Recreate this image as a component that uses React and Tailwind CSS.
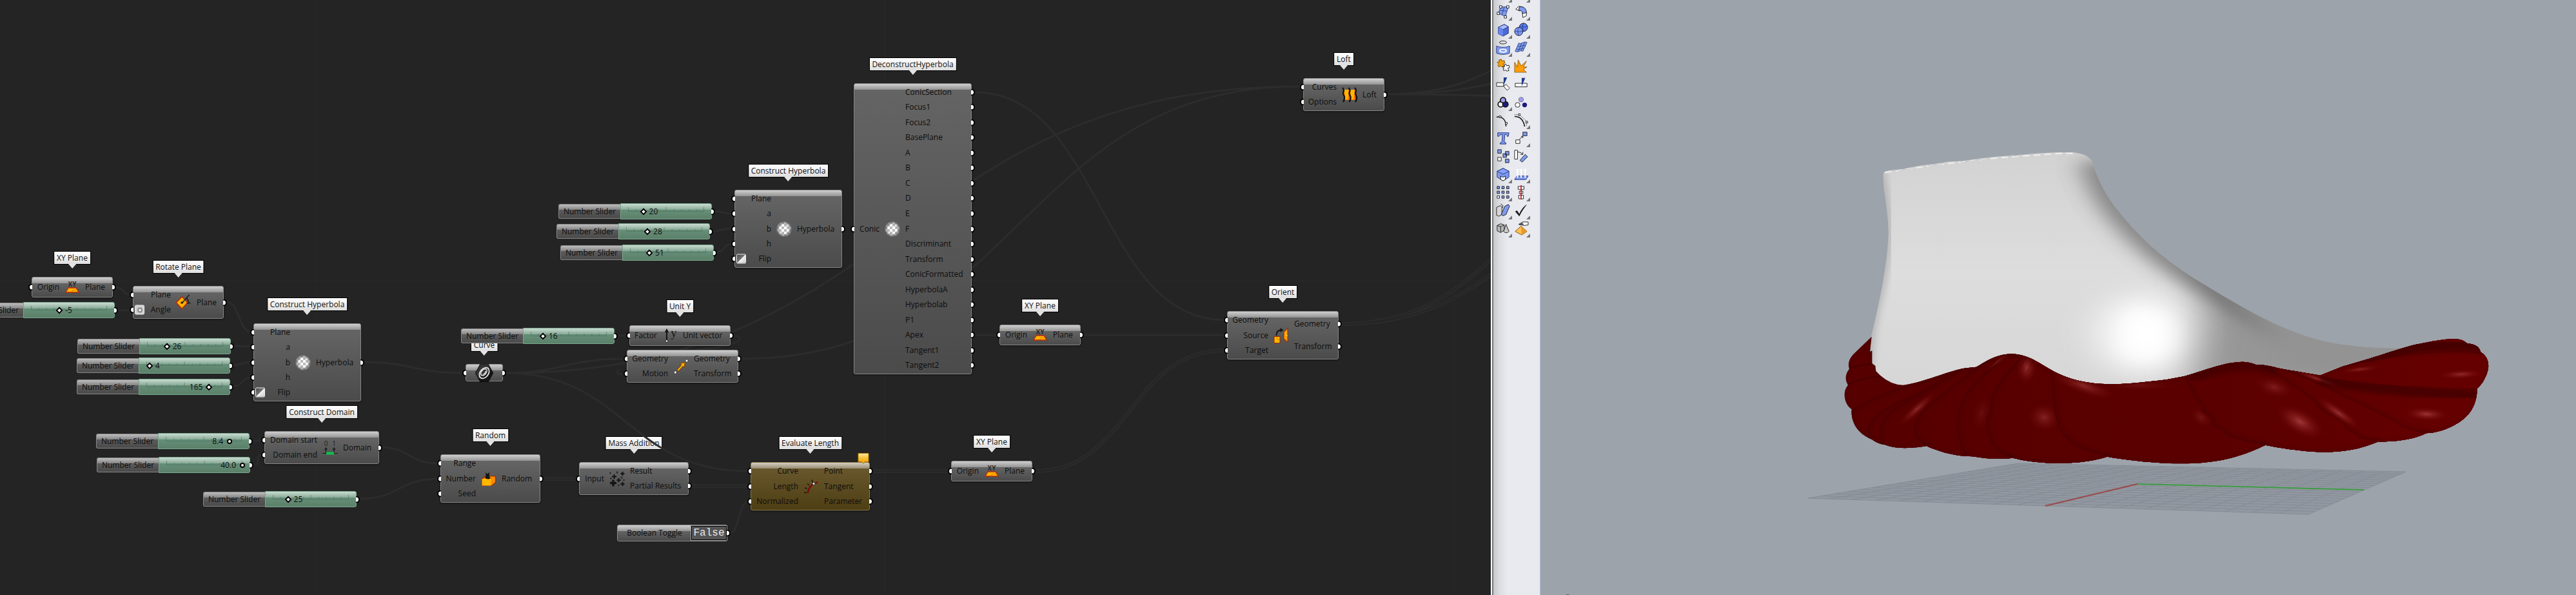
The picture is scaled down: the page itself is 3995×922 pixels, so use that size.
import React from "react";

/* ---------- component icons ---------- */

const Svg = ({ children, className = "size-6" }) => (
  <svg viewBox="0 0 24 24" className={`overflow-visible ${className}`} aria-hidden="true">
    {children}
  </svg>
);

const XYIcon = () => (
  <Svg>
    <text x="12" y="11" textAnchor="middle" fontSize="10" fontWeight="700" fill="#2a2a2a" fontFamily="Open Sans, sans-serif">XY</text>
    <path d="M6 13h12l4 7H2z" fill="#ffb400" stroke="#b8290a" strokeWidth="1.3" />
    <path d="M12 16.500h6M12 16.500v3" stroke="#e87a00" fill="none" />
  </Svg>
);

const RotatePlaneIcon = () => (
  <Svg className="size-7 shrink-0">
    <path d="M9.500 4l7.500 8-7.500 8L2 12z" fill="#ffb400" stroke="#b8290a" strokeWidth="1.300" />
    <path d="M9.500 12h4" stroke="#e87a00" />
    <circle cx="9.500" cy="12" r="1.600" fill="#222" />
    <path d="M10 12L19.500 1.500M15 6.500c3 1 3.500 3 3.200 6M14.500 6l2.500.2M16 12.500h5" stroke="#222" strokeWidth="1.400" fill="none" />
  </Svg>
);

const GlobeIcon = () => {
  const cells = [];
  for (let r = 0; r < 6; r++)
    for (let c = 0; c < 6; c++)
      if ((r + c) % 2) cells.push(<rect key={`${r}-${c}`} x={c * 4} y={r * 4} width="4" height="4" fill="#fff" />);
  return (
    <Svg>
      <defs>
        <radialGradient id="globeFade">
          <stop offset="0.55" stopColor="#fff" />
          <stop offset="1" stopColor="#fff" stopOpacity="0.1" />
        </radialGradient>
        <mask id="globeMask"><circle cx="12" cy="12" r="12" fill="url(#globeFade)" /></mask>
      </defs>
      <g mask="url(#globeMask)">
        <rect width="24" height="24" fill="#b9b9b9" />
        {cells}
      </g>
    </Svg>
  );
};

const DomainIcon = () => (
  <Svg>
    <text x="5.500" y="9" textAnchor="middle" fontSize="10" fill="#1c1c1c" fontFamily="Open Sans, sans-serif">0</text>
    <text x="18" y="9" textAnchor="middle" fontSize="10" fill="#1c1c1c" fontFamily="Open Sans, sans-serif">1</text>
    <path d="M5.500 11v10M18 11v10M0 20.500h24" stroke="#1c1c1c" strokeWidth="1.200" />
    <path d="M3 13h5l-2.500 4zM15.500 13h5L18 17z" fill="#1c1c1c" />
    <rect x="6" y="18.500" width="12" height="4" fill="#0bc24e" />
  </Svg>
);

const CurveHexIcon = () => (
  <Svg className="size-7 shrink-0">
    <path d="M6.500 0.800h11L23.500 12l-6 11.200h-11L0.500 12z" fill="#161616" stroke="#0a0a0a" />
    <path d="M6.500 1h11L20 6 5 20 .8 12z" fill="#4a4a4a" opacity=".6" />
    <ellipse cx="12" cy="12" rx="8" ry="5.500" transform="rotate(-52 12 12)" fill="none" stroke="#e8e8e8" strokeWidth="1.500" />
    <ellipse cx="12.500" cy="11" rx="5" ry="3.200" transform="rotate(-52 12 12)" fill="none" stroke="#e8e8e8" strokeWidth="1.300" />
    <path d="M10 14c2 0 4-2 4-4.500" fill="none" stroke="#e8e8e8" strokeWidth="1.300" />
  </Svg>
);

const UnitYIcon = () => (
  <Svg>
    <path d="M7 5v15" stroke="#141414" strokeWidth="2" />
    <path d="M7 1l3.200 6H3.800z" fill="#141414" />
    <circle cx="7" cy="20.500" r="1.900" fill="#fff" stroke="#141414" />
    <text x="18" y="14" textAnchor="middle" fontSize="19" fill="#1c1c1c" fontFamily="Liberation Serif, serif">y</text>
  </Svg>
);

const MoveIcon = () => (
  <Svg>
    <path d="M6 17.500l7-8.200-2.800-1.800 8-2-1 8.500-2-2.800-7 8z" fill="#ffb400" stroke="#7a3a00" strokeWidth="1" />
    <circle cx="3.300" cy="21" r="2.200" fill="#fff" stroke="#333" />
    <circle cx="21" cy="3" r="2.200" fill="#fff" stroke="#333" />
  </Svg>
);

const RandomIcon = () => (
  <Svg>
    <path d="M1.500 12l6-4h15v9.500l-6 5h-15z" fill="#ff8a00" stroke="#a12c00" strokeWidth="1.200" />
    <path d="M1.500 12h14v10.500h-14z" fill="#ffb800" />
    <path d="M7 1l1.500 3h2.500l1.500-3 .5 8 2 2-3 1.500-4-.5-2-2 1.500-2z" fill="#151515" />
  </Svg>
);

const MassIcon = () => (
  <Svg>
    <g stroke="#151515" fill="none">
      <path d="M1 18.500h10M6 13.500v10" strokeWidth="3.400" />
      <path d="M4 8.500h7M7.500 5v7M11.500 14h6M14.500 11v6M17.500 20h6M20.500 17v6M17.500 4h6M20.500 1v6" strokeWidth="2.100" />
      <path d="M0 3h3M1.500 1.500v3M10 2h4M12 0v4M17 10h4M19 8v4M1 11.500h3M2.500 10v3M13 22h3M14.500 20.500v3M21 14h3M22.500 12.500v3" strokeWidth="1.100" opacity=".75" />
    </g>
  </Svg>
);

const EvalLengthIcon = () => (
  <Svg>
    <path d="M6.500 22C8 14 12 7.500 22 5.500" fill="none" stroke="#7a0c0c" strokeWidth="2.600" />
    <path d="M1 21.500h4M2 14l3.500 1M6 7.500l3 2.500M13 1.500l1.500 4" stroke="#1b1505" strokeWidth="1.600" />
    <circle cx="16" cy="7.500" r="1.900" fill="#fff" stroke="#333" />
  </Svg>
);

const OrientIcon = () => (
  <Svg>
    <path d="M1 13.500h9v10H1z" fill="#ffb800" stroke="#a12c00" strokeWidth="1.100" />
    <path d="M5.500 18h4.500M5.500 18v-4" stroke="#e87a00" />
    <path d="M16 7l6-6.500v22L16 17z" fill="#ff9d00" stroke="#a12c00" strokeWidth="1.100" />
    <path d="M19 6v6h3" stroke="#ffd24d" fill="none" />
    <path d="M4.500 12C4.500 6 7 3.500 12 3.500" fill="none" stroke="#151515" strokeWidth="1.800" />
    <path d="M10.500 0l5 3.500-5 3.500z" fill="#151515" />
  </Svg>
);

const LoftIcon = () => (
  <Svg>
    <path d="M2.500 4H21c2 5-1 9 0 16H3c1-7-2-11-.5-16z" fill="#ff6a00" />
    <path d="M4 4h6c2 5-1 9 0 15H5c1-6-2-10-1-15zM13 4h6c2 5-1 9 0 15h-5c1-6-2-10-1-15z" fill="#ffb600" />
    <path d="M1 1c3 3 2 5 1 8-.5 3 3 5 2 8 0 3-1 4-2 6M10.500 1c3 3 2 5 1 8-.5 3 3 5 2 8 0 3-1 4-2 6M20 1c3 3 2 5 1 8-.5 3 3 5 2 8 0 3-1 4-2 6" fill="none" stroke="#111" strokeWidth="2.300" />
  </Svg>
);

/* ---------- node canvas ---------- */

const Label = ({ children }) => (
  <div className="absolute bottom-full left-1/2 z-0 mb-[19px] h-[21px] -translate-x-1/2 border border-black bg-linear-to-b from-white to-[#dedede] px-1 text-center text-[12px] leading-[19px] whitespace-nowrap text-[#111]">
    {children}
    <svg viewBox="0 0 12 7" className="absolute top-full left-1/2 h-[7px] w-3 -translate-x-1/2" aria-hidden="true">
      <path d="M0 0h12L6 7z" fill="#e4e4e4" />
    </svg>
  </div>
);

const Grip = ({ side }) => (
  <span
    className={
      side === "in"
        ? "absolute top-1/2 right-full h-[11px] w-[6px] -translate-y-1/2 rounded-l-full border-2 border-r-0 border-black bg-white"
        : "absolute top-1/2 left-full h-[11px] w-[6px] -translate-y-1/2 rounded-r-full border-2 border-l-0 border-black bg-white"
    }
  />
);

const steel = "border-[#868686] bg-[linear-gradient(to_bottom,#cfcfcf_0px,#939393_9px,#646464_9px,#4b4b4b_100%)]";
const amber = "border-[#8a7748] bg-[linear-gradient(to_bottom,#d6cfc0_0px,#978c74_9px,#68572c_9px,#4e3e13_100%)]";

const AngleBadge = () => (
  <span className="absolute top-1/2 left-[2px] flex h-[15px] w-[15px] -translate-y-1/2 items-center justify-center rounded-[2px] border border-[#eee] bg-[#cfcfcf]">
    <span className="size-2 rounded-full border-2 border-[#888] bg-[#eee]" />
  </span>
);
const FlipBadge = () => (
  <span className="absolute top-1/2 left-[2px] h-[15px] w-[15px] -translate-y-1/2 rounded-[2px] border border-[#eee] bg-[linear-gradient(135deg,#4a4a4a_0%,#777_50%,#f2f2f2_50%,#ccc_100%)]" />
);

function Node({ place, inWidth, label, inputs, outputs, icon, tone = steel, badges = {}, warning }) {
  return (
    <section className={`absolute ${place}`}>
      {label && <Label>{label}</Label>}
      <div className={`relative z-20 flex h-full rounded-[3px] border py-[1px] text-[12px] text-[#0c0c0c] shadow-[0_1px_3px_rgba(0,0,0,0.5)] ${tone}`}>
        <ul className={`flex flex-none flex-col ${inWidth}`}>
          {inputs.map((name) => (
            <li key={name} className="relative flex flex-1 items-center justify-end leading-none whitespace-nowrap">
              <Grip side="in" />
              {badges[name]}
              {name}
            </li>
          ))}
        </ul>
        <div className="flex w-10 flex-none items-center justify-center">{icon}</div>
        <ul className="flex flex-1 flex-col">
          {outputs.map((name) => (
            <li key={name} className="relative flex flex-1 items-center leading-none whitespace-nowrap">
              {name}
              <Grip side="out" />
            </li>
          ))}
        </ul>
        {warning && (
          <svg viewBox="0 0 18 17" className="absolute right-0 bottom-full -mb-[2px] h-[17px] w-[18px]" aria-hidden="true">
            <defs>
              <linearGradient id="warn" x1="0" y1="0" x2="0" y2="1">
                <stop offset="0" stopColor="#ffe9a8" />
                <stop offset="0.45" stopColor="#f7c13a" />
                <stop offset="1" stopColor="#f2a100" />
              </linearGradient>
            </defs>
            <path d="M1 .5h16v13h-5.500L9 16.500 6.500 13.500H1z" fill="url(#warn)" stroke="#b87c00" />
          </svg>
        )}
      </div>
    </section>
  );
}

function Slider({ place, min = 0, max = 100, value, text = String(value), round }) {
  const ratio = (value - min) / (max - min);
  const center = 12 + ratio * 118;
  const valueStyle = ratio > 0.5 ? { right: 142 - center + 9 } : { left: center + 8 };
  return (
    <label className={`absolute z-20 flex h-[25px] w-[238px] items-center text-[12px] text-[#0c0c0c] ${place}`}>
      <span className="flex h-[23px] flex-1 items-center justify-center rounded-l-[3px] border border-r-0 border-[#868686] bg-[linear-gradient(to_bottom,#bdbdbd_0px,#848484_8px,#5c5c5c_8px,#4a4a4a_100%)] leading-none whitespace-nowrap">
        Number Slider
      </span>
      <span className="relative h-[25px] w-[142px] rounded-r-[3px] border border-[#79a78d] bg-[linear-gradient(to_bottom,#c9dcd1_0px,#87a996_9px,#668f79_9px,#5b8069_100%)]">
        <svg viewBox="0 0 118 7" className="absolute top-[5px] left-[11px] h-[7px] w-[118px] opacity-60" aria-hidden="true">
          <path
            d="M.5 0v6.500H117.500V0M59 0v6.500M12.300 3v3.500M24.100 3v3.500M35.900 3v3.500M47.700 3v3.500M71.300 3v3.500M83.100 3v3.500M94.900 3v3.500M106.700 3v3.500"
            fill="none"
            stroke="#4b6e5a"
            strokeWidth="1"
          />
        </svg>
        <span style={valueStyle} className="absolute top-0 leading-[23px]">{text}</span>
        <input
          type="range"
          min={min}
          max={max}
          step="any"
          defaultValue={value}
          className={
            "absolute top-[7px] left-[7px] h-[9px] w-[126px] appearance-none bg-transparent [&::-webkit-slider-thumb]:size-2 [&::-webkit-slider-thumb]:appearance-none [&::-webkit-slider-thumb]:border-2 [&::-webkit-slider-thumb]:border-solid [&::-webkit-slider-thumb]:border-black [&::-webkit-slider-thumb]:bg-white " +
            (round ? "[&::-webkit-slider-thumb]:rounded-full" : "[&::-webkit-slider-thumb]:rotate-45")
          }
        />
        <Grip side="out" />
      </span>
    </label>
  );
}

const wires = [
  [180, 445, 202, 457], [183, 481, 202, 481], [352, 468, 389, 514],
  [363, 536, 389, 537], [361, 566, 389, 561], [361, 599, 389, 585],
  [564, 561, 717, 578], [782, 578, 967, 556], [782, 578, 2016, 134],
  [1149, 556, 2016, 134], [782, 578, 1160, 730], [959, 520, 972, 520],
  [590, 693, 679, 718], [558, 773, 679, 742], [1132, 826, 1160, 777],
  [393, 684, 405, 682], [395, 720, 405, 705], [1513, 519, 1546, 519],
  [1679, 519, 1899, 519], [1513, 143, 1899, 496], [1108, 327, 1134, 331],
  [1106, 358, 1134, 354], [1112, 391, 1134, 378], [2151, 146, 2500, 60],
  [2151, 146, 2500, 108], [2151, 146, 2500, 152],
];
const lists = [
  [842, 742, 895, 742], [1073, 753, 1160, 753], [1353, 730, 1471, 730],
  [1605, 730, 1899, 543], [2080, 502, 2560, 290], [2080, 502, 2560, 340],
];
const bend = ([x1, y1, x2, y2]) => {
  const h = Math.max((x2 - x1) / 2, 10);
  return `M${x1} ${y1}C${x1 + h} ${y1} ${x2 - h} ${y2} ${x2} ${y2}`;
};

const Grid = () => (
  <svg className="pointer-events-none absolute inset-0 size-full" fill="none" aria-hidden="true">
    <path d="M0 435H2600M491 0V1200M1373 0V1200M2255 0V1200" stroke="#282828" />
  </svg>
);

const Wires = () => (
  <svg className="pointer-events-none absolute inset-0 z-10 size-full" fill="none" aria-hidden="true">
    <path d={wires.map(bend).join("")} stroke="#2c2c2c" strokeWidth="3" />
    <path d="M1137 520C1165 524 1135 538 1080 542M960 572C952 579 960 581 967 579" stroke="#2a2a2a" strokeWidth="3" />
    <path d={lists.map(bend).join("")} stroke="#2b2b2b" strokeWidth="6" />
    <path d={lists.map(bend).join("")} stroke="#242424" strokeWidth="1.500" />
  </svg>
);

const hyperbolaInputs = ["Plane", "a", "b", "h", "Flip"];

const Canvas = () => (
  <main className="relative min-w-0 flex-[2312] overflow-hidden bg-[#242424]">
    <Grid />
    <Wires />
    <Node place="left-[49px] top-[429px] h-8 w-[126px]" inWidth="w-[42px]" label="XY Plane" inputs={["Origin"]} outputs={["Plane"]} icon={<XYIcon />} />
    <Slider place="-left-[60px] top-[468px]" min={-20} max={20} value={-5} />
    <Node place="left-[206px] top-[443px] h-[51px] w-[141px]" inWidth="w-[58px]" label="Rotate Plane" inputs={["Plane", "Angle"]} outputs={["Plane"]} icon={<RotatePlaneIcon />} badges={{ Angle: <AngleBadge /> }} />
    <Node place="left-[393px] top-[501px] h-[121px] w-[167px]" inWidth="w-[56px]" label="Construct Hyperbola" inputs={hyperbolaInputs} outputs={["Hyperbola"]} icon={<GlobeIcon />} badges={{ Flip: <FlipBadge /> }} />
    <Slider place="left-[120px] top-[524px]" value={26} />
    <Slider place="left-[119px] top-[554px]" value={4} />
    <Slider place="left-[119px] top-[587px]" max={200} value={165} />
    <Node place="left-[410px] top-[668px] h-[51px] w-[178px]" inWidth="w-[81px]" label="Construct Domain" inputs={["Domain start", "Domain end"]} outputs={["Domain"]} icon={<DomainIcon />} />
    <Slider place="left-[149px] top-[671px]" max={10} value={8.4} round />
    <Slider place="left-[150px] top-[708px]" max={40} value={40} text="40.0" round />
    <Slider place="left-[315px] top-[761px]" max={125} value={25} />

    <section className="absolute top-[564px] left-[722px] h-[27px] w-[58px]">
      <Label>Curve</Label>
      <div className={`relative z-20 flex h-full items-center justify-center rounded-[3px] border ${steel}`}>
        <Grip side="in" />
        <CurveHexIcon />
        <Grip side="out" />
      </div>
    </section>
    <Slider place="left-[715px] top-[508px]" value={16} />
    <Node place="left-[972px] top-[542px] h-[51px] w-[173px]" inWidth="w-[63px]" inputs={["Geometry", "Motion"]} outputs={["Geometry", "Transform"]} icon={<MoveIcon />} />
    <Node place="left-[976px] top-[504px] h-8 w-[157px]" inWidth="w-[42px]" label="Unit Y" inputs={["Factor"]} outputs={["Unit vector"]} icon={<UnitYIcon />} />
    <Node place="left-[683px] top-[704px] h-[75px] w-[155px]" inWidth="w-[54px]" label="Random" inputs={["Range", "Number", "Seed"]} outputs={["Random"]} icon={<RandomIcon />} />
    <Node place="left-[898px] top-[716px] h-[51px] w-[170px]" inWidth="w-[38px]" label="Mass Addition" inputs={["Input"]} outputs={["Result", "Partial Results"]} icon={<MassIcon />} />
    <Node place="left-[1164px] top-[716px] h-[75px] w-[185px]" inWidth="w-[73px]" label="Evaluate Length" inputs={["Curve", "Length", "Normalized"]} outputs={["Point", "Tangent", "Parameter"]} icon={<EvalLengthIcon />} tone={amber} warning />

    <section className={`absolute top-[813px] left-[957px] z-20 flex h-[26px] w-[171px] items-center rounded-[3px] border text-[12px] text-[#0c0c0c] ${steel}`}>
      <span id="toggle-name" className="flex-1 text-center leading-none">Boolean Toggle</span>
      <button type="button" aria-labelledby="toggle-name" className="h-[22px] w-[55px] border border-black bg-[#555] text-center font-['Liberation_Mono',monospace] text-[16px] leading-none text-[#e8e8e8] outline outline-[#999]">
        False
      </button>
      <Grip side="out" />
    </section>

    <Node place="left-[1139px] top-[294px] h-[121px] w-[167px]" inWidth="w-[56px]" label="Construct Hyperbola" inputs={hyperbolaInputs} outputs={["Hyperbola"]} icon={<GlobeIcon />} badges={{ Flip: <FlipBadge /> }} />
    <Slider place="left-[866px] top-[315px]" value={20} />
    <Slider place="left-[863px] top-[346px]" value={28} />
    <Slider place="left-[869px] top-[379px]" max={200} value={51} />
    <Node
      place="left-[1324px] top-[129px] h-[451px] w-[183px]"
      inWidth="w-[39px]"
      label="DeconstructHyperbola"
      inputs={["Conic"]}
      outputs={["ConicSection", "Focus1", "Focus2", "BasePlane", "A", "B", "C", "D", "E", "F", "Discriminant", "Transform", "ConicFormatted", "HyperbolaA", "Hyperbolab", "P1", "Apex", "Tangent1", "Tangent2"]}
      icon={<GlobeIcon />}
    />
    <Node place="left-[1550px] top-[503px] h-8 w-[126px]" inWidth="w-[42px]" label="XY Plane" inputs={["Origin"]} outputs={["Plane"]} icon={<XYIcon />} />
    <Node place="left-[1475px] top-[714px] h-8 w-[126px]" inWidth="w-[42px]" label="XY Plane" inputs={["Origin"]} outputs={["Plane"]} icon={<XYIcon />} />
    <Node place="left-[1903px] top-[482px] h-[75px] w-[173px]" inWidth="w-[63px]" label="Orient" inputs={["Geometry", "Source", "Target"]} outputs={["Geometry", "Transform"]} icon={<OrientIcon />} />
    <Node place="left-[2021px] top-[121px] h-[51px] w-[126px]" inWidth="w-[51px]" label="Loft" inputs={["Curves", "Options"]} outputs={["Loft"]} icon={<LoftIcon />} />
  </main>
);

/* ---------- tool palette ---------- */

const B = "#7f9bf0";
const K = "#1a1a1a";

const tools = [
  ["Polyline", true, <path d="M3 20l8-8 9 6" fill="none" stroke={K} />],
  ["Rotate view", true, <path d="M9 12l8 8-2-8 6 2-4-6z" fill={K} />],
  ["Surface from points", true, <><path d="M8 4h13l-5 16L4 15z" fill={B} stroke="#31457f" /><path d="M14 4l-4 14M6 10l12 1" stroke="#31457f" /><path d="M6 2h4v4H6zM19 2h3v4h-4V2zM2 13h4v4H2zM14 19h4v4h-4z" fill="#fff" stroke={K} /></>],
  ["Sweep", true, <><path d="M3 8l5-5 6 1-4 7zM14 14l7-1v6l-6 3z" fill="#fff" stroke={K} /><path d="M9 4c8-1 12 3 12 10l-7 1c0-4-2-5-6-5z" fill={B} stroke={K} /></>],
  ["Box", true, <><path d="M4 8l10-5 7 4v11l-9 5-8-4z" fill="#4a68d8" stroke="#1f2f77" /><path d="M4 8l10-5 7 4-9 5z" fill="#a9bbff" stroke="#1f2f77" /><path d="M4 8l8 4v11l-8-4z" fill="#6a86ee" /></>],
  ["Boolean union", true, <><circle cx="16" cy="8" r="7" fill="#5b7cec" stroke={K} /><circle cx="8" cy="15" r="7" fill="#7b98f8" stroke={K} /><path d="M1.500 14c4 2 9 2 13 0M8 8c-2 4-2 10 0 14M10 6c4 2 9 2 13 0M16 1c-2 4-2 10 0 14" stroke="#1f2f77" fill="none" strokeWidth=".8" /></>],
  ["Project curve", true, <><ellipse cx="12" cy="3" rx="6" ry="2.500" fill="none" stroke={K} /><path d="M1 9c6 3 16 3 22 0v12c-6 3-16 3-22 0z" fill={B} stroke="#1f2f77" /><ellipse cx="12" cy="17" rx="5.500" ry="2.500" fill="none" stroke="#fff" strokeWidth="2" /></>],
  ["Mesh", true, <><path d="M8 4c5 3 8-4 14-1l-7 15c-5-3-8 3-13 0z" fill={B} stroke="#31457f" /><path d="M13 4L7 19M18 3l-6 14M6 9c5 3 9-3 14 0M4 14c5 3 9-3 13 0" stroke="#31457f" fill="none" /></>],
  ["Join", false, <><path d="M2 6l4-1-1-3 4-1 1 3 4-1 1 4-3 2 2 3-4 2-2-2-3 2-2-3 2-2z" fill="#f5a000" stroke="#7a4a00" /><path d="M11 14l4-1-1-3 3-1 1 3 4-1 1 4-3 1 2 4-4 1-1-2-4 1-1-3 2-1z" fill="#fff" stroke={K} /></>],
  ["Explode", false, <path d="M1 23V6l5 8 1-12 5 10 9-8-5 10 6 0-6 4 5 5z" fill="#ff9d0a" stroke="#5b3b00" strokeWidth=".7" />],
  ["Trim", false, <><path d="M1 10h12v6H1z" fill="#fff" stroke={K} /><path d="M13 16l4-3 6 6-4 4z" fill="#fff" stroke={K} /><path d="M13 1h6l-6 13z" fill="#1d3a8c" /></>],
  ["Split", false, <><path d="M2 11h20v6H2z" fill="#fff" stroke={K} /><path d="M13 2h6l-6 14z" fill="#1d3a8c" /></>],
  ["Group", true, <><circle cx="8" cy="16" r="4.500" fill="#fff" stroke={K} strokeWidth="2" /><circle cx="16" cy="16" r="4.500" fill="#1c1c84" stroke={K} strokeWidth="2" /><circle cx="12" cy="9" r="4.500" fill="#9f9cf4" stroke={K} strokeWidth="2" /></>],
  ["Ungroup", false, <><circle cx="6" cy="17" r="4" fill="#fff" stroke={K} /><circle cx="18" cy="17" r="4" fill="#1c1c84" /><circle cx="12" cy="8" r="4" fill="#9f9cf4" stroke="#777" /></>],
  ["Edit points", false, <><path d="M1 7c9-2 16 4 16 16" fill="none" stroke={K} strokeWidth="1.600" /><path d="M5.500 5h3v3h-3zM16 16h3v3h-3z" fill="#fff" stroke={K} /></>],
  ["Control points", true, <><path d="M1 6c9 0 15 6 17 17" fill="none" stroke={K} strokeWidth="1.800" /><path d="M1 3h8l12 11v9" fill="none" stroke={K} strokeDasharray="1.500 1.500" /><path d="M7.500 1.500h3v3h-3zM20 14h3v3h-3z" fill="#fff" stroke={K} /></>],
  ["Text object", false, <path d="M3 3h19l-1 6h-2c0-3-1-3-4-3l-1 13 3 1v2H7v-2l3-1 1-13C8 6 6 7 5 9H3z" fill={B} stroke="#1f2f77" />],
  ["Move", true, <><path d="M15 2h7v6h-7z" fill={B} stroke={K} /><path d="M3 15h7v6H3z" fill="#fff" stroke={K} /><path d="M9 14l6-5M12 9h3v3" stroke={K} fill="none" /></>],
  ["Copy", false, <g stroke={K}><path d="M3 1h6v6H3zM16 4h6v6h-6zM12 8h6v6h-6zM16 17h6v6h-6z" fill={B} /><path d="M3 14h6v6H3z" fill="#fff" /></g>],
  ["Rotate", false, <><path d="M1 2h5v15H1z" fill="#fff" stroke={K} /><path d="M10 19l9-10 4 4-9 9z" fill={B} stroke={K} /><path d="M6 5c4 0 6 1 9 4M15 5v4h-4" fill="none" stroke={K} /></>],
  ["Scale", true, <><path d="M2 7l10-5 10 5v10l-10 6-10-6z" fill={B} stroke="#1f2f77" /><path d="M2 7l10 5 10-5-10-5z" fill="#86a3ff" stroke="#1f2f77" /><path d="M8 15l4 2 4-2v6l-4 2-4-2z" fill="#fff" stroke={K} /></>],
  ["Extrude", true, <><path d="M1 21l4-6h19l-4 6z" fill={B} stroke="#1f2f77" /><path d="M6 18V4M12 18V4M19 18V4" stroke="#fff" strokeWidth="2.200" /><path d="M3.500 6L6 2l2.500 4zM9.500 6L12 2l2.500 4zM16.500 6L19 2l2.500 4z" fill="#fff" /></>],
  ["Array", true, <g stroke={K}><path d="M2 2h4v4H2zM10 2h4v4h-4zM18 2h4v4h-4zM2 10h4v4H2zM10 10h4v4h-4zM18 10h4v4h-4zM10 18h4v4h-4zM18 18h4v4h-4z" fill={B} /><path d="M2 18h4v4H2z" fill="#fff" /></g>],
  ["Align", true, <><path d="M7 2h10v5H7zM9 10h6v4H9zM8 17h8v6H8z" fill="#fff" stroke={K} /><path d="M12 0v24" stroke="#c8141c" strokeWidth="1.800" /></>],
  ["Flow", true, <><path d="M1 7l6-3 3 2v13l-5 3-4-2z" fill="#d6d6d6" stroke={K} /><path d="M15 5l6-3 2 3-6 14-5 2-3-2z" fill={B} stroke={K} /><path d="M8 1l4 3-1 4" fill="none" stroke={K} /></>],
  ["Check", true, <path d="M2 14l3-2 4 6C13 9 17 5 22 2 17 8 13 14 9 22z" fill={K} />],
  ["Solid shapes", true, <><path d="M2 7l6-3 6 2v9l-6 4-6-3z" fill="#b9b9b9" stroke={K} /><path d="M2 7l6 2 6-3M8 9v9" stroke={K} fill="none" /><path d="M17 5l5 12c-2 3-7 3-9 0z" fill="#c9c9c9" stroke={K} /></>],
  ["Render", true, <><path d="M12 8l10 9-9 6L2 17z" fill="#ffc054" stroke="#7a4a00" /><path d="M12 8l1 15 9-6z" fill="#e89a28" /><path d="M8 5l7-4h9v5l-7 1z" fill="#fff" stroke={K} /><path d="M8 6l6-4 3 4z" fill={K} opacity=".7" /></>],
];

const Toolbar = () => (
  <aside className="flex w-[77px] flex-none overflow-hidden border-r border-r-[#b7c2da] bg-[linear-gradient(to_right,#fff_0px,#fff_2px,#75787a_2px,#75787a_4px,#c6c8cc_4px,#dcdde1_14px,#e9eaef_26px)]">
    <div className="-mt-6 ml-[5px] grid grid-cols-2 content-start">
      {tools.map(([name, menu, art]) => (
        <button key={name} type="button" aria-label={name} className="relative flex size-7 items-center justify-center">
          <Svg className="size-[22px]">{art}</Svg>
          {menu && (
            <svg viewBox="0 0 6 6" className="absolute right-0 bottom-0 size-[6px]" aria-hidden="true">
              <path d="M6 0v6H0z" fill="#757575" />
            </svg>
          )}
        </button>
      ))}
    </div>
  </aside>
);

/* ---------- 3D viewport ---------- */

const corners = [[415, 772], [741, 718], [1342, 731], [1191, 797]];

function project(u, v) {
  const [[x0, y0], [x1, y1], [x2, y2], [x3, y3]] = corners;
  const dx1 = x1 - x2, dx2 = x3 - x2, dx3 = x0 - x1 + x2 - x3;
  const dy1 = y1 - y2, dy2 = y3 - y2, dy3 = y0 - y1 + y2 - y3;
  const d = dx1 * dy2 - dx2 * dy1;
  const g = (dx3 * dy2 - dx2 * dy3) / d;
  const h = (dx1 * dy3 - dx3 * dy1) / d;
  const w = g * u + h * v + 1;
  return [
    ((x1 - x0 + g * x1) * u + (x3 - x0 + h * x3) * v + x0) / w,
    ((y1 - y0 + g * y1) * u + (y3 - y0 + h * y3) * v + y0) / w,
  ];
}
const segment = (a, b) => `M${project(...a).join(" ")}L${project(...b).join(" ")}`;
const floor = Array.from({ length: 21 }, (_, i) => i / 20)
  .map((t) => segment([t, 0], [t, 1]) + segment([0, t], [1, t]))
  .join("");

const slipper =
  "M158 65L150 135L160 130L160 190L175 200L178 225L198 245Q250 290 305 290C400 280 520 220 600 211L645 206C700 175 740 145 815 145C890 150 940 190 992 219C1080 270 1180 288 1300 286C1380 282 1450 275 1530 265L1610 250C1700 225 1800 182 1885 182C1910 183 1930 188 1950 197C1980 195 2010 200 2060 214L2245 245L2350 203C2480 170 2640 110 2700 100C2770 85 2820 76 2870 75C2905 76 2915 85 2930 97C2970 100 2985 115 2992 137C3020 155 3030 180 3027 210C3020 250 3000 285 2975 305C2975 345 2965 400 2920 440C2870 485 2800 512 2737 514C2690 540 2600 555 2515 553C2450 580 2380 602 2255 602C2150 600 2050 580 1990 569C1900 610 1800 655 1590 655C1480 653 1350 640 1255 623C1180 645 1110 654 1000 653C920 650 860 640 815 629C760 636 690 634 630 622C550 622 470 600 413 573C360 583 270 590 222 568C200 566 175 555 160 543C100 520 60 470 65 403C30 380 20 320 48 290C30 260 38 235 54 215C45 190 55 165 75 145Z";

const foot =
  "M192 170C192 162 198 158 215 155L235 151L250 145L270 139L300 132L330 124L360 121L395 112L430 105L470 100L520 92L560 88L590 88Q622 92 633 120C645 190 660 250 700 335C745 430 790 500 860 578C930 655 990 720 1060 770C1120 810 1180 832 1290 832L1300 960L1100 1000L200 1000C165 940 162 850 166 790C185 650 200 520 203 400C203 300 190 230 192 170Z";

const folds = [
  ["M65 403C130 365 200 325 320 290L600 200V0H3100V700H0Z", "a"],
  ["M140 540C125 480 150 450 220 400L600 200H3100V700H160Z", "b"],
  ["M200 565C180 500 200 450 260 400L600 200H3100V700H210Z", "b2"],
  ["M413 573Q380 560 358 525L354 470L405 395C480 330 560 270 645 206L800 100H3100V700H413Z", "c"],
  ["M590 612C550 540 545 470 565 390C590 310 680 230 780 145H3100V700H590Z", "d"],
  ["M815 629L745 600L712 560L712 542L692 510L692 440L708 420L710 380C720 300 780 230 860 155L900 100H3100V700H815Z", "e"],
  ["M1255 623Q1180 605 1100 572L1050 525L1020 480L1020 460C1000 400 993 300 992 219V100H3100V700H1255Z", "f"],
  ["M1990 569Q1900 560 1810 525L1790 500L1745 482L1740 445L1695 413L1693 385L1655 345L1653 328L1610 250V100H3100V700H1990Z", "g"],
  ["M2515 553L2435 540L2400 515L2360 495L2350 465L2255 413L2210 362C2150 320 2050 240 1950 197V100H3100V700H2515Z", "h"],
  ["M2737 514Q2640 505 2560 445C2400 370 2250 290 2060 214V100H3100V700H2737Z", "i"],
  ["M2245 245C2400 285 2700 300 2975 305L3100 305V0H2200Z", "j"],
];

/* centre x, centre y, radius x, radius y, tilt, strength */
const shine = {
  a: [],
  b: [],
  b2: [[370, 400, 120, 26, -42, 0.6]],
  c: [],
  d: [[670, 420, 45, 90, 15, 0.2], [740, 180, 90, 18, -35, 0.5]],
  e: [[880, 210, 50, 80, 5, 0.65], [960, 440, 80, 70, 15, 0.5]],
  f: [[1140, 290, 170, 44, 20, 0.6], [1400, 290, 200, 30, 0, 0.25], [1690, 440, 60, 40, 40, 0.3]],
  g: [[2030, 300, 100, 50, 15, 0.4], [2150, 460, 130, 62, 30, 0.8]],
  h: [[2330, 420, 130, 30, 35, 0.7], [2190, 255, 100, 20, 25, 0.4]],
  i: [[2230, 260, 140, 16, 20, 0.6], [2740, 425, 110, 34, 3, 0.75]],
  j: [[2430, 217, 100, 16, -6, 0.5], [2900, 240, 110, 24, -3, 0.6]],
};

const Viewport = () => (
  <section className="relative min-w-0 flex-[1606] overflow-hidden bg-[#9ca3ab]">
    <svg viewBox="0 0 1606 922" preserveAspectRatio="xMidYMid meet" className="absolute inset-0 size-full" role="img" aria-label="Foot model with shell slipper">
      <defs>
        <clipPath id="footClip"><path d={foot} /></clipPath>
        <clipPath id="slipperClip"><path d={slipper} /></clipPath>
        {folds.map(([d, id]) => (
          <clipPath key={id} id={`fold-${id}`}><path d={d} /></clipPath>
        ))}
        <filter id="soft" x="-50%" y="-50%" width="200%" height="200%"><feGaussianBlur stdDeviation="28" /></filter>
        <filter id="softer" x="-50%" y="-50%" width="200%" height="200%"><feGaussianBlur stdDeviation="45" /></filter>
        <filter id="edge" x="-20%" y="-20%" width="140%" height="140%"><feGaussianBlur stdDeviation="9" /></filter>
        <radialGradient id="glint">
          <stop offset="0" stopColor="#b04444" />
          <stop offset="0.5" stopColor="#8c2222" stopOpacity="0.5" />
          <stop offset="1" stopColor="#640000" stopOpacity="0" />
        </radialGradient>
        <linearGradient id="skin" x1="0" y1="0" x2="0" y2="1">
          <stop offset="0" stopColor="#d2d2d2" />
          <stop offset="0.5" stopColor="#dddddd" />
          <stop offset="1" stopColor="#d6d6d6" />
        </linearGradient>
        <linearGradient id="slipperBase" gradientUnits="userSpaceOnUse" x1="0" y1="0" x2="3030" y2="0">
          <stop offset="0" stopColor="#560000" />
          <stop offset="0.6" stopColor="#5b0000" />
          <stop offset="1" stopColor="#660000" />
        </linearGradient>
      </defs>

      <path d={`M${corners.map((c) => c.join(" ")).join("L")}Z`} fill="#9298a1" />
      <path d={floor} stroke="#868b94" strokeWidth="1" fill="none" />
      <path d="M926 750L783 784" stroke="#9c4a4c" strokeWidth="2" />
      <path d="M926 750L1277 759" stroke="#3f9b45" strokeWidth="2" />

      <g transform="translate(391 200) scale(0.7334 0.4082)">
        <path d={foot} fill="url(#skin)" />
        <g clipPath="url(#footClip)">
          <path d="M860 420C900 700 830 780 850 1000H1400V500Z" fill="#969696" filter="url(#softer)" />
          <path d="M642 120C655 190 665 250 705 335C750 430 795 500 865 578C935 655 1000 720 1080 775" fill="none" stroke="#555" strokeWidth="62" opacity=".75" filter="url(#soft)" />
          <path d="M900 600C960 700 1000 760 1040 900L1320 1000V780Z" fill="#939393" filter="url(#soft)" />
          <path d="M185 160C200 300 205 400 195 520C185 650 165 700 160 900" fill="none" stroke="#888" strokeWidth="12" opacity=".7" filter="url(#edge)" />
          <ellipse cx="740" cy="780" rx="85" ry="150" fill="#fff" filter="url(#softer)" />
          <ellipse cx="752" cy="780" rx="42" ry="90" fill="#fff" filter="url(#soft)" />
          <path d="M195 165L300 137L430 110L560 93L600 92" fill="none" stroke="#eee" strokeWidth="5" strokeDasharray="14 9" />
        </g>
        <path d="M212 160l12-6 4 6 10-9 6 3 10-8M285 137l8 4 8-8 8 4 10-8M355 124l8 4 8-8 10 3 12-9 12 3 12-7M455 104l10-4 6 3 12-6" fill="none" stroke="#c4c6c8" strokeWidth="2.500" />
      </g>

      <g transform="translate(461 500) scale(0.33333)">
        <path d={slipper} fill="url(#slipperBase)" />
        <g clipPath="url(#slipperClip)">
          <path d="M50 215Q100 195 165 190M45 290Q100 260 200 250" stroke="#420000" strokeWidth="5" fill="none" />
          {folds.map(([d, id]) => (
            <g key={id} clipPath={`url(#fold-${id})`}>
              <path d={d} fill="url(#slipperBase)" />
              <path d={d} fill="none" stroke="#3a0000" strokeWidth="20" opacity=".5" filter="url(#edge)" />
              {shine[id].map(([cx, cy, rx, ry, tilt, strength]) => (
                <ellipse key={`${cx}-${cy}`} cx={cx} cy={cy} rx={rx} ry={ry} transform={`rotate(${tilt} ${cx} ${cy})`} fill="url(#glint)" opacity={strength} />
              ))}
            </g>
          ))}
          <g clipPath="url(#fold-i)">
            <path d="M2245 262C2400 300 2700 325 2980 335" fill="none" stroke="#2e0000" strokeWidth="50" opacity=".5" filter="url(#edge)" />
          </g>
          <path d="M2245 245C2400 285 2700 300 2975 305L3100 305V0H2200Z" fill="url(#slipperBase)" />
          <g clipPath="url(#fold-j)">
            <path d="M2350 170C2560 120 2800 90 3000 110" fill="none" stroke="#320000" strokeWidth="60" opacity=".55" filter="url(#edge)" />
            <path d="M2370 200C2560 150 2800 125 2990 140M2350 205C2560 165 2700 115 2930 100" fill="none" stroke="#3a0000" strokeWidth="3" opacity=".6" />
            {shine.j.map(([cx, cy, rx, ry, tilt, strength]) => (
              <ellipse key={cx} cx={cx} cy={cy} rx={rx} ry={ry} transform={`rotate(${tilt} ${cx} ${cy})`} fill="url(#glint)" opacity={strength} />
            ))}
          </g>
          <path d="M1640 258C1720 235 1800 200 1885 200S1990 210 2040 225" fill="none" stroke="#330000" strokeWidth="50" opacity=".4" filter="url(#edge)" />
          <path d="M780 150L690 240M860 155L790 230M880 155L850 205M910 175L880 230" stroke="#3a0000" strokeWidth="3" opacity=".5" />
          <path d={slipper} fill="none" stroke="#350000" strokeWidth="10" opacity=".35" filter="url(#edge)" />
        </g>
      </g>
    </svg>
    <span className="absolute -bottom-[10px] left-[39px] text-[12px] leading-[16px] text-[#55585c]">z</span>
  </section>
);

export default function App() {
  return (
    <div className="flex h-screen w-full overflow-hidden bg-[#242424] font-['Open_Sans',sans-serif]">
      <Canvas />
      <Toolbar />
      <Viewport />
    </div>
  );
}
